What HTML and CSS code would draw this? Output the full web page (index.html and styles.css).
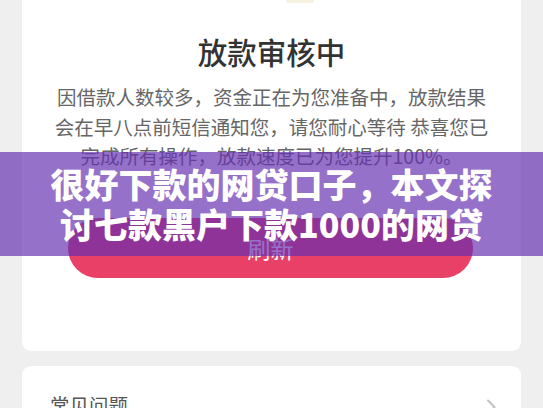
FILE: index.html
```html
<!DOCTYPE html>
<html lang="zh-CN">
<head>
<meta charset="utf-8">
<title>放款审核中</title>
<link rel="stylesheet" href="styles.css">
</head>
<body>
<main class="page">
  <section class="card status">
    <div class="icon-tail"></div>
    <h1 class="status-title">放款审核中</h1>
    <p class="status-text">因借款人数较多，资金正在为您准备中，放款结果会在早八点前短信通知您，请您耐心等待 恭喜您已完成所有操作，放款速度已为您提升100%。</p>
    <button class="refresh-btn" type="button">刷新</button>
  </section>
  <section class="card faq">
    <span class="faq-title">常见问题</span>
    <svg class="chevron" width="10" height="16" viewBox="0 0 10 16"><path d="M2 1.5 L8.5 8 L2 14.5" fill="none" stroke="#c2c2c2" stroke-width="2" stroke-linecap="round" stroke-linejoin="round"/></svg>
  </section>
</main>
<div class="banner">
  <h2 class="banner-text">很好下款的网贷口子，本文探讨七款黑户下款1000的网贷</h2>
</div>
</body>
</html>
```

FILE: styles.css
```css
* { box-sizing: border-box; }
html, body { margin: 0; padding: 0; }
body {
  background: #efefef;
  font-family: "Noto Sans CJK SC", "Noto Sans", sans-serif;
  width: 543px;
  height: 408px;
  overflow: hidden;
  position: relative;
}
.page {
  padding: 0 22px;
  display: flex;
  flex-direction: column;
  gap: 15px;
}
.card {
  background: #ffffff;
  border-radius: 9px;
}
.status {
  border-top-left-radius: 0;
  border-top-right-radius: 0;
  display: flex;
  flex-direction: column;
  align-items: center;
  padding: 0 0 73px;
}
.icon-tail {
  width: 28px;
  height: 3px;
  background: #f5f1de;
  border-radius: 0 0 14px 14px;
  margin-left: 56px;
}
.status-title {
  margin: 28px 0 0;
  font-size: 29.5px;
  line-height: 40px;
  font-weight: 500;
  color: #333333;
}
.status-text {
  margin: 11px 0 0;
  width: 440px;
  font-size: 19.5px;
  line-height: 29.5px;
  color: #666666;
  text-align: center;
}
.refresh-btn {
  margin-top: 47px;
  width: 405px;
  height: 60px;
  border: 0;
  border-radius: 30px;
  background: #e94068;
  color: #ffffff;
  font-family: inherit;
  font-size: 23px;
  margin-left: -2px;
}
.faq {
  height: 80px;
  display: flex;
  justify-content: space-between;
  align-items: flex-start;
  padding: 25px 25px 0 28px;
}
.faq-title {
  font-size: 19.5px;
  line-height: 28px;
  color: #555555;
}
.chevron {
  margin-top: 8px;
}
.banner {
  position: absolute;
  left: 0;
  top: 152px;
  width: 543px;
  height: 104px;
  background: rgba(100, 45, 175, 0.68);
  display: flex;
  align-items: center;
  justify-content: center;
  padding: 0 41px;
}
.banner-text {
  margin: 0;
  font-size: 34px;
  line-height: 40px;
  font-weight: 900;
  color: #ffffff;
  text-align: center;
}
```
